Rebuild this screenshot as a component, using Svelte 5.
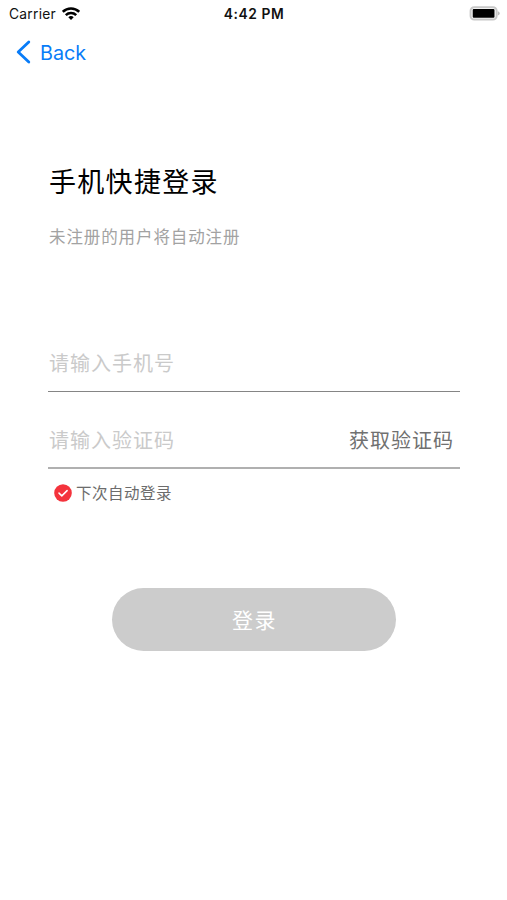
<script>
  let remember = $state(true);
</script>

<div class="screen">
  <header class="status">
    <div class="carrier">
      <span>Carrier</span>
      <svg class="wifi" width="18" height="13" viewBox="0 0 18 13" fill="none" stroke="#000" stroke-width="2.5">
        <path d="M.8 4.8a11.7 11.7 0 0 1 16.4 0" />
        <path d="M3.8 8.1a7.4 7.4 0 0 1 10.4 0" />
        <path d="M9 13L6.3 10.2a3.9 3.9 0 0 1 5.4 0z" fill="#000" stroke="none" />
      </svg>
    </div>
    <time>4:42 PM</time>
    <div class="power">
      <svg width="31" height="15" viewBox="0 0 31 15">
        <rect x="1.6" y="1.2" width="26" height="12.4" rx="3.6" fill="#fff" stroke="#c8c8c8" stroke-width="2" />
        <rect x="3.7" y="3" width="21.8" height="8.8" rx="1" fill="#000" />
        <path d="M28.8 5.2q1.9.6 1.9 2.2t-1.9 2.2z" fill="#bdbdbd" />
      </svg>
    </div>
  </header>

  <nav>
    <button class="back">
      <svg width="15" height="24" viewBox="0 0 15 24" fill="none" stroke="#087cf8" stroke-width="2.8" stroke-linecap="round" stroke-linejoin="round">
        <path d="M12.8 2L2.2 12l10.6 10" />
      </svg>
      <span>Back</span>
    </button>
  </nav>

  <main>
    <h1>手机快捷登录</h1>
    <p class="hint">未注册的用户将自动注册</p>

    <div class="field phone"><span class="placeholder">请输入手机号</span></div>
    <div class="field code">
      <span class="placeholder">请输入验证码</span>
      <button class="send">获取验证码</button>
    </div>

    <button class="remember" onclick={() => (remember = !remember)}>
      <svg width="18" height="18" viewBox="0 0 18 18">
        <circle cx="9" cy="9" r="8.8" fill={remember ? '#f4333c' : '#ccc'} />
        <path d="M5 9.1l2.8 2.8 5.3-5.3" fill="none" stroke="#fff" stroke-width="1.5" stroke-linecap="round" stroke-linejoin="round" />
      </svg>
      <span>下次自动登录</span>
    </button>

    <button class="login">登录</button>
  </main>
</div>

<style>
  :global(body) {
    background: #fff;
  }
  .screen {
    width: 507px;
    height: 900px;
    overflow: hidden;
    background: #fff;
    font-family: Inter, "Noto Sans CJK SC", sans-serif;
  }
  button {
    border: 0;
    padding: 0;
    background: none;
    font-family: inherit;
    white-space: nowrap;
  }
  svg {
    display: block;
    flex: none;
  }
  .status {
    display: grid;
    grid-template-columns: 1fr auto 1fr;
    align-items: center;
    height: 27px;
    padding: 1px 7px 0 9px;
    box-sizing: border-box;
    font-size: 13.8px;
    line-height: 26px;
    color: #111;
  }
  .carrier {
    display: flex;
    align-items: center;
    gap: 6px;
    letter-spacing: 0.25px;
  }
  .wifi {
    margin-top: -2px;
  }
  time {
    font-weight: 600;
    font-size: 13.8px;
    letter-spacing: 0.55px;
    margin-right: 1px;
  }
  .power {
    display: flex;
    justify-content: flex-end;
    margin-top: -1px;
  }
  nav {
    height: 50px;
    display: flex;
    align-items: center;
    padding-left: 16px;
  }
  .back {
    display: flex;
    align-items: center;
    gap: 9px;
    color: #087cf8;
    font-size: 19.8px;
    line-height: 24px;
  }
  .back span {
    padding-top: 1px;
  }
  main {
    display: flex;
    flex-direction: column;
    width: 412px;
    margin-left: 48px;
    padding-top: 86px;
  }
  h1 {
    margin: 0;
    padding-left: 1px;
    font-size: 27px;
    font-weight: 400;
    line-height: 40px;
    letter-spacing: 1.3px;
    color: #000;
  }
  .hint {
    margin: 22px 0 0;
    padding-left: 1px;
    font-size: 16.5px;
    line-height: 24px;
    letter-spacing: 0.9px;
    color: #a2a2a2;
  }
  .field {
    display: flex;
    align-items: center;
    justify-content: space-between;
    box-sizing: border-box;
    border-bottom: 2px solid #999;
    font-size: 20px;
    letter-spacing: 1px;
    line-height: 30px;
  }
  .phone {
    height: 61px;
    margin-top: 82px;
    padding-top: 5px;
    border-bottom: 1px solid #858585;
  }
  .code {
    height: 77px;
    padding-top: 22px;
    border-bottom-color: #b0b0b0;
  }
  .placeholder {
    padding-left: 1px;
    color: #cacaca;
  }
  .send {
    margin-right: 6px;
    font-size: 20px;
    letter-spacing: 1px;
    line-height: 30px;
    color: #707070;
  }
  .remember {
    display: flex;
    align-self: flex-start;
    align-items: center;
    gap: 4px;
    margin: 11px 0 0 6px;
    font-size: 15.5px;
    letter-spacing: 0.5px;
    line-height: 24px;
    color: #6c6c6c;
  }
  .remember span {
    padding-top: 2px;
  }
  .remember svg {
    margin-top: -1px;
  }
  .login {
    width: 284px;
    height: 63px;
    margin: 82px 0 0 64px;
    padding-bottom: 2px;
    border-radius: 32px;
    background: #ccc;
    color: #fff;
    font-size: 21px;
    letter-spacing: 1.5px;
    text-indent: 1px;
  }
</style>
